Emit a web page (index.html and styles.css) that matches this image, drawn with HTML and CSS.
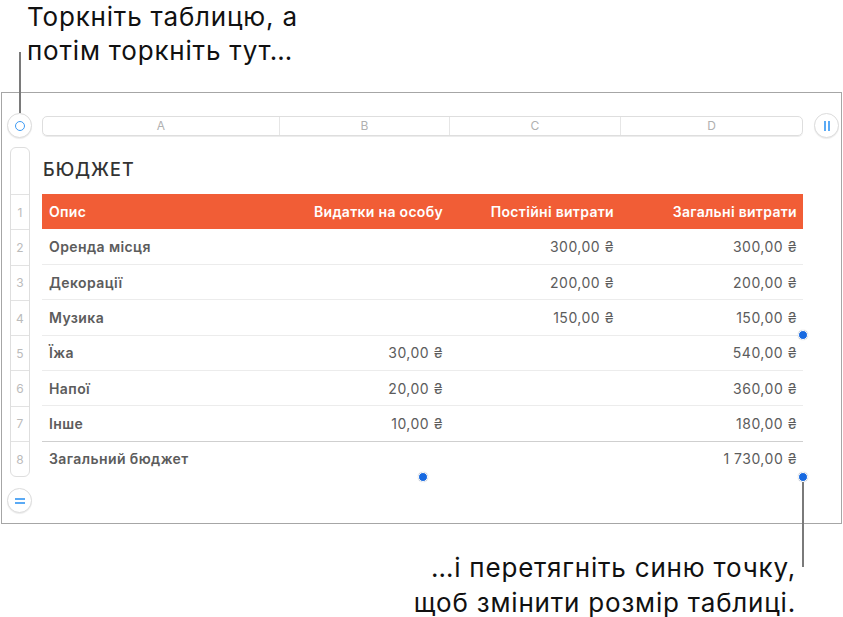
FILE: index.html
```html
<!DOCTYPE html>
<html lang="uk">
  <head>
    <meta charset="UTF-8" />
    <meta name="viewport" content="width=device-width, initial-scale=1.0" />
    <title>Бюджет</title>
    <link rel="stylesheet" href="styles.css">
  </head>
  <body>
    <div class="page">
      <p class="hint hint-top">Торкніть таблицю, а<br>потім торкніть тут…</p>
      <span class="leader leader-top"></span>

      <div class="frame">
        <div class="toolbar">
          <button class="round-btn"><span class="ring"></span></button>
          <div class="col-bar">
            <span>A</span>
            <span>B</span>
            <span>C</span>
            <span>D</span>
          </div>
          <button class="round-btn"><span class="bars"></span></button>
        </div>

        <div class="sheet">
          <div class="row-strip">
            <span class="strip-cell strip-title"></span>
            <span class="strip-cell">1</span>
            <span class="strip-cell">2</span>
            <span class="strip-cell">3</span>
            <span class="strip-cell">4</span>
            <span class="strip-cell">5</span>
            <span class="strip-cell">6</span>
            <span class="strip-cell">7</span>
            <span class="strip-cell">8</span>
          </div>

          <div class="table-wrap">
            <h2 class="table-title">БЮДЖЕТ</h2>
            <table class="budget">
              <colgroup>
                <col class="c-a">
                <col class="c-b">
                <col class="c-c">
                <col class="c-d">
              </colgroup>
              <thead>
                <tr>
                  <th class="left">Опис</th>
                  <th>Видатки на особу</th>
                  <th>Постійні витрати</th>
                  <th>Загальні витрати</th>
                </tr>
              </thead>
              <tbody>
                <tr>
                  <td class="name">Оренда місця</td>
                  <td></td>
                  <td>300,00 ₴</td>
                  <td>300,00 ₴</td>
                </tr>
                <tr>
                  <td class="name">Декорації</td>
                  <td></td>
                  <td>200,00 ₴</td>
                  <td>200,00 ₴</td>
                </tr>
                <tr>
                  <td class="name">Музика</td>
                  <td></td>
                  <td>150,00 ₴</td>
                  <td>150,00 ₴</td>
                </tr>
                <tr>
                  <td class="name">Їжа</td>
                  <td>30,00 ₴</td>
                  <td></td>
                  <td>540,00 ₴</td>
                </tr>
                <tr>
                  <td class="name">Напої</td>
                  <td>20,00 ₴</td>
                  <td></td>
                  <td>360,00 ₴</td>
                </tr>
                <tr>
                  <td class="name">Інше</td>
                  <td>10,00 ₴</td>
                  <td></td>
                  <td>180,00 ₴</td>
                </tr>
                <tr class="total">
                  <td class="name">Загальний бюджет</td>
                  <td></td>
                  <td></td>
                  <td>1 730,00 ₴</td>
                </tr>
              </tbody>
            </table>

            <span class="dot dot-right"></span>
            <span class="dot dot-bottom"></span>
            <span class="dot dot-corner"></span>
          </div>
        </div>

        <button class="round-btn eq-btn"><span class="eq"></span></button>
      </div>

      <span class="leader leader-bottom"></span>
      <p class="hint hint-bottom">…і перетягніть синю точку,<br>щоб змінити розмір таблиці.</p>
    </div>
  </body>
</html>
```

FILE: styles.css
```css
* {
  margin: 0;
  padding: 0;
  box-sizing: border-box;
  font-family: "Inter", "Roboto", "Liberation Sans", sans-serif;
}
body {
  background: #ffffff;
  color: #111;
}
.page {
  position: relative;
  width: 843px;
}

/* callouts */
.hint {
  font-size: 26px;
  line-height: 34px;
  color: #111;
  letter-spacing: 0.8px;
}
.hint-top {
  padding-left: 27px;
}
.hint-bottom {
  margin-top: 26px;
  padding-right: 47px;
  text-align: right;
  line-height: 35px;
}
.leader {
  position: absolute;
  width: 2px;
  background: #7a7a7a;
}
.leader-top {
  left: 19px;
  top: 52px;
  height: 61px;
}
.leader-bottom {
  left: 802px;
  top: 482px;
  height: 85px;
}

/* frame */
.frame {
  margin: 24px 1px 0 1px;
  border: 1px solid #a6a6a6;
  padding: 20px 2px 10px 5px;
}
.toolbar {
  display: flex;
  align-items: center;
  height: 25px;
}
.round-btn {
  width: 25px;
  height: 25px;
  border-radius: 50%;
  border: 1px solid #dcdcdc;
  background: #fff;
  box-shadow: 0 1px 1px rgba(0, 0, 0, 0.08);
  display: flex;
  align-items: center;
  justify-content: center;
}
.ring {
  width: 10px;
  height: 10px;
  border: 1.5px solid #3d9bf5;
  border-radius: 50%;
}
.bars {
  width: 6px;
  height: 10px;
  border-left: 2px solid #5aaaf5;
  border-right: 2px solid #5aaaf5;
}
.eq {
  width: 10px;
  height: 6px;
  border-top: 2px solid #5aaaf5;
  border-bottom: 2px solid #5aaaf5;
}
.col-bar {
  margin: 0 11px 0 10px;
  width: 761px;
  height: 20px;
  border: 1px solid #dedede;
  border-radius: 5px;
  box-shadow: 0 1px 0 #ececec;
  display: grid;
  grid-template-columns: 236px 170px 171px 1fr;
}
.col-bar span {
  font-size: 12px;
  line-height: 18px;
  color: #b0b0b0;
  text-align: center;
  border-left: 1px solid #e6e6e6;
}
.col-bar span:first-child {
  border-left: none;
}

/* sheet */
.sheet {
  display: flex;
  gap: 12px;
  margin-top: 9px;
  padding-left: 3px;
}
.row-strip {
  width: 20px;
  display: flex;
  flex-direction: column;
  border: 1px solid #dedede;
  border-radius: 6px;
}
.strip-cell {
  height: 35.3px;
  border-top: 1px solid #e2e2e2;
  font-size: 12px;
  color: #bbbbbb;
  display: flex;
  align-items: center;
  justify-content: center;
}
.strip-cell.strip-title {
  height: 46px;
  border-top: none;
}
.table-wrap {
  position: relative;
  width: 761px;
}
.table-title {
  height: 47px;
  padding: 13px 0 0 1px;
  font-size: 18px;
  line-height: 20px;
  font-weight: 500;
  letter-spacing: 1px;
  color: #333;
}
.budget {
  width: 761px;
  border-collapse: collapse;
  table-layout: fixed;
}
.c-a { width: 237px; }
.c-b { width: 170px; }
.c-c { width: 171px; }
.c-d { width: 183px; }
.budget th,
.budget td {
  height: 35.3px;
  padding: 0 6px 0 7px;
  font-size: 14px;
  letter-spacing: 0.5px;
  text-align: right;
  white-space: nowrap;
}
.budget th {
  background: #f15d36;
  color: #fff;
  font-weight: 600;
  letter-spacing: 0.3px;
}
.budget th.left,
.budget td.name {
  text-align: left;
}
.budget td {
  color: #5c5c5c;
  border-top: 1px solid #ececec;
}
.budget td.name {
  font-weight: 600;
  letter-spacing: 0.4px;
}
.budget tbody tr:first-child td {
  border-top: none;
}
.budget tr.total td {
  border-top: 1px solid #cfcfcf;
}

/* resize handles */
.dot {
  position: absolute;
  width: 10px;
  height: 10px;
  border-radius: 50%;
  background: #1769e0;
  border: 1.5px solid #fff;
  box-shadow: 0 0 1px rgba(0, 0, 0, 0.3);
  transform: translate(-50%, -50%);
}
.dot-right {
  left: 761px;
  top: 188px;
}
.dot-bottom {
  left: 381px;
  top: 330px;
}
.dot-corner {
  left: 761px;
  top: 330px;
}
.eq-btn {
  margin-top: 11px;
}
```
